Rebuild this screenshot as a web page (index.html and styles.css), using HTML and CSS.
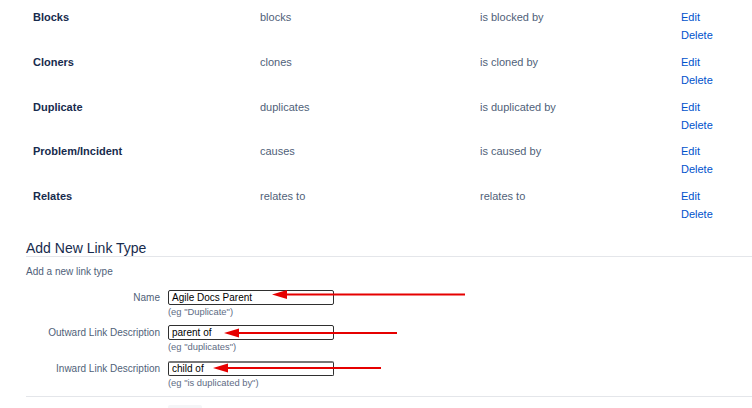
FILE: index.html
```html
<!DOCTYPE html>
<html>
<head>
<meta charset="utf-8">
<link rel="stylesheet" href="styles.css">
</head>
<body>
<div class="page">
  <div class="types">
    <div class="row">
      <div class="cell name">Blocks</div>
      <div class="cell">blocks</div>
      <div class="cell">is blocked by</div>
      <div class="cell actions"><a class="link">Edit</a><a class="link">Delete</a></div>
    </div>
    <div class="row">
      <div class="cell name">Cloners</div>
      <div class="cell">clones</div>
      <div class="cell">is cloned by</div>
      <div class="cell actions"><a class="link">Edit</a><a class="link">Delete</a></div>
    </div>
    <div class="row">
      <div class="cell name">Duplicate</div>
      <div class="cell">duplicates</div>
      <div class="cell">is duplicated by</div>
      <div class="cell actions"><a class="link">Edit</a><a class="link">Delete</a></div>
    </div>
    <div class="row">
      <div class="cell name">Problem/Incident</div>
      <div class="cell">causes</div>
      <div class="cell">is caused by</div>
      <div class="cell actions"><a class="link">Edit</a><a class="link">Delete</a></div>
    </div>
    <div class="row">
      <div class="cell name">Relates</div>
      <div class="cell">relates to</div>
      <div class="cell">relates to</div>
      <div class="cell actions"><a class="link">Edit</a><a class="link">Delete</a></div>
    </div>
  </div>

  <h2 class="heading">Add New Link Type</h2>
  <p class="subtitle">Add a new link type</p>

  <div class="form">
    <div class="field">
      <label class="label">Name</label>
      <div class="control">
        <div class="input">Agile Docs Parent</div>
        <div class="hint">(eg "Duplicate")</div>
      </div>
    </div>
    <div class="field">
      <label class="label">Outward Link Description</label>
      <div class="control">
        <div class="input">parent of</div>
        <div class="hint">(eg "duplicates")</div>
      </div>
    </div>
    <div class="field">
      <label class="label">Inward Link Description</label>
      <div class="control">
        <div class="input input-last">child of</div>
        <div class="hint">(eg "is duplicated by")</div>
      </div>
    </div>
  </div>

  <div class="buttons">
    <div class="button"></div>
  </div>

  <svg class="arrows" width="752" height="408" viewBox="0 0 752 408">
    <g fill="#e60000" stroke="#e60000">
      <line x1="285" y1="294.5" x2="465" y2="294.5" stroke-width="2"/>
      <polygon points="272,294.5 287,290 287,299" stroke="none"/>
      <line x1="237" y1="333" x2="397" y2="333" stroke-width="2"/>
      <polygon points="224,333 239,328.5 239,337.5" stroke="none"/>
      <line x1="226" y1="368" x2="381" y2="368" stroke-width="2"/>
      <polygon points="213,368 228,363.5 228,372.5" stroke="none"/>
    </g>
  </svg>
</div>
</body>
</html>
```

FILE: styles.css
```css
* { box-sizing: border-box; }

html, body {
  margin: 0;
  padding: 0;
  background: #ffffff;
}

body {
  font-family: "Liberation Sans", Arial, sans-serif;
  color: #42526e;
  width: 752px;
  height: 408px;
  overflow: hidden;
}

.page {
  position: relative;
  padding-left: 26px;
}

.types {
  display: flex;
  flex-direction: column;
}

.row {
  display: grid;
  grid-template-columns: 227px 220px 201px 1fr;
  height: 44.8px;
  padding-top: 8px;
}

.cell {
  padding-left: 7px;
  font-size: 11px;
  line-height: 18px;
  color: #505f79;
}

.name {
  font-weight: bold;
  color: #172b4d;
}

.actions {
  display: flex;
  flex-direction: column;
  align-items: flex-start;
}

.link {
  color: #0052cc;
  text-decoration: none;
  cursor: pointer;
}

.heading {
  margin: 17px 0 0 0;
  font-size: 14px;
  line-height: 15px;
  font-weight: normal;
  color: #172b4d;
  border-bottom: 1px solid #e4e6ea;
}

.subtitle {
  margin: 8px 0 0 0;
  font-size: 10px;
  line-height: 14px;
  color: #505f79;
}

.form {
  margin-top: 11px;
  display: flex;
  flex-direction: column;
  gap: 7px;
}

.field {
  display: grid;
  grid-template-columns: 134px 166px;
  column-gap: 8px;
  align-items: start;
}

.label {
  text-align: right;
  font-size: 10px;
  line-height: 15px;
  color: #505f79;
}

.control {
  display: flex;
  flex-direction: column;
}

.input {
  height: 15px;
  border: 1px solid #2f2f2f;
  border-radius: 2px;
  padding: 0 3px;
  font-size: 10px;
  line-height: 13px;
  color: #000000;
  background: #ffffff;
}

.input-last {
  border-top: 2px solid #777777;
  line-height: 12px;
}

.hint {
  font-size: 9.4px;
  line-height: 13.5px;
  color: #5e6c84;
}

.buttons {
  margin-top: 7px;
  border-top: 1px solid #e4e6ea;
  padding: 8px 0 0 142px;
}

.button {
  width: 34px;
  height: 20px;
  background: #f4f5f7;
  border-radius: 2px;
}

.arrows {
  position: absolute;
  left: 0;
  top: 0;
  pointer-events: none;
}
```
